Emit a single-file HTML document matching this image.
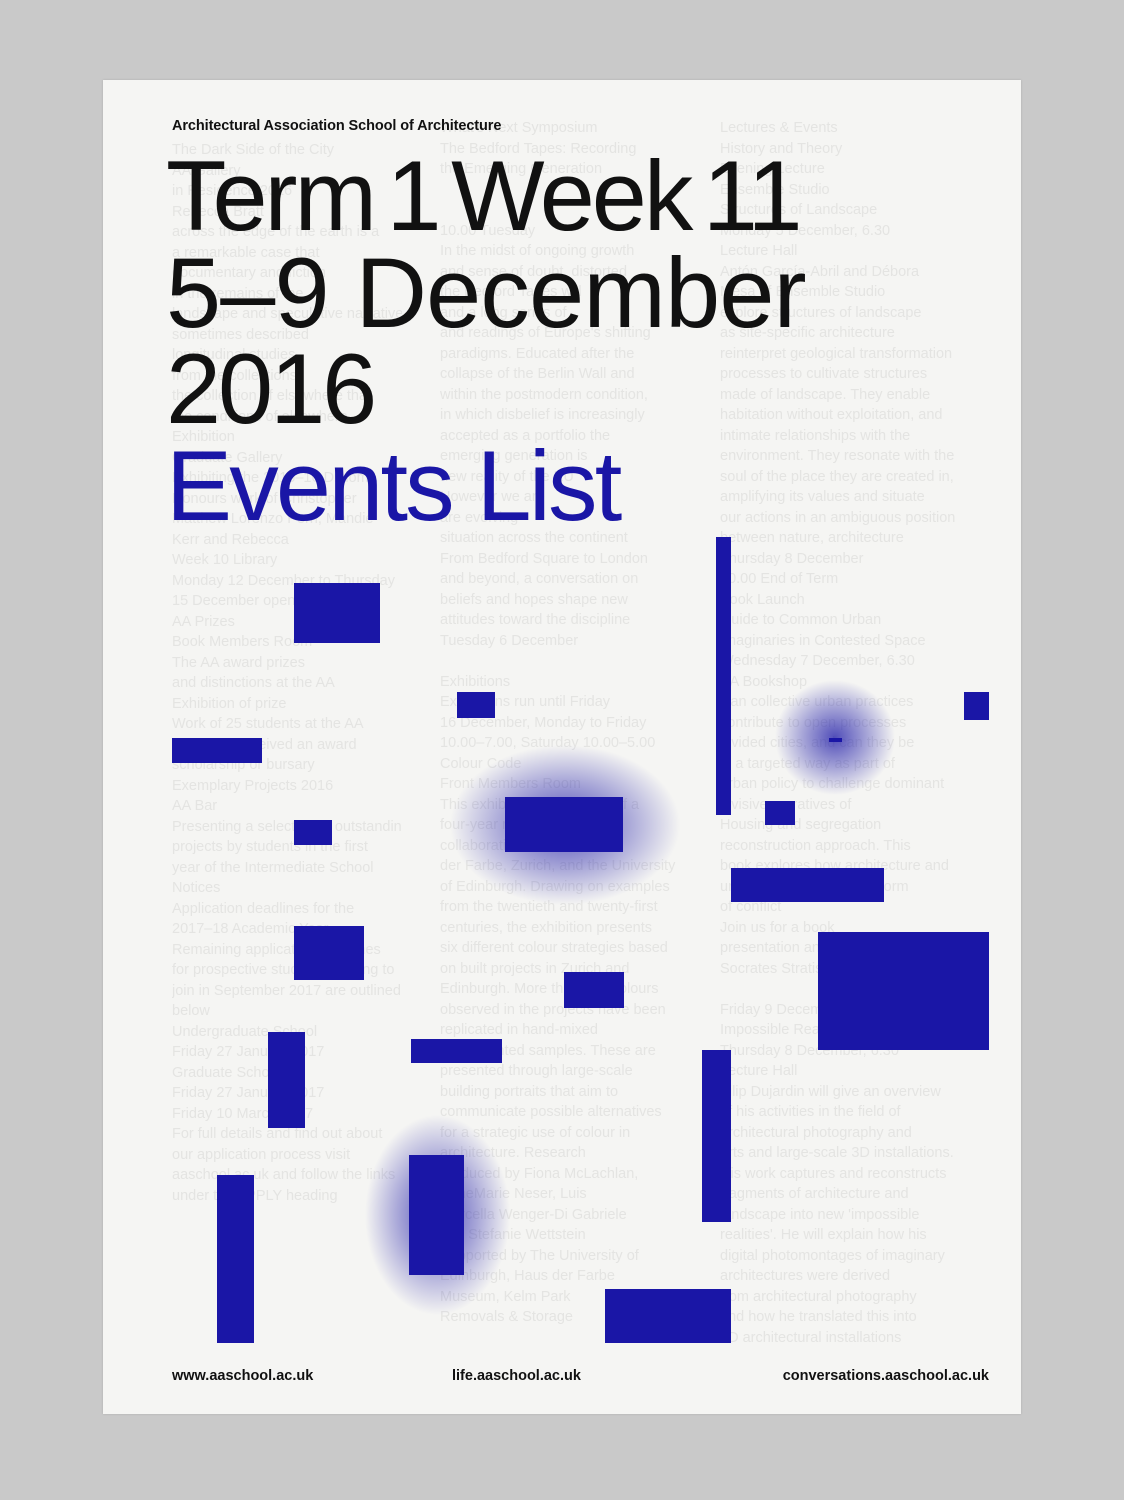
<!DOCTYPE html>
<html><head><meta charset="utf-8"><style>
html,body{margin:0;padding:0}
body{width:1124px;height:1500px;background:#c9c9c9;position:relative;overflow:hidden;font-family:"Liberation Sans",Arial,sans-serif}
.paper{position:absolute;left:103px;top:80px;width:918px;height:1334px;background:#f5f5f3;box-shadow:0 0 2px rgba(0,0,0,.15)}
.g{position:absolute;color:#e4e4e2;font-size:14.5px;line-height:20.5px;white-space:pre;overflow:hidden}
.head{position:absolute;left:172px;top:118px;font-size:14.5px;font-weight:bold;color:#111;letter-spacing:-0.1px}
.big{position:absolute;left:166px;font-size:99px;line-height:96px;letter-spacing:-2px;color:#111;white-space:nowrap}
.b{position:absolute;background:#1a16a6}
.glow{position:absolute;border-radius:50%;background:radial-gradient(closest-side,rgba(26,22,166,.75),rgba(26,22,166,.35) 55%,rgba(26,22,166,0))}
.f{position:absolute;top:1368px;font-size:14.5px;font-weight:bold;color:#111}
</style></head><body>
<div class="paper"></div>
<div class="g" style="left:172px;top:140px;width:230px;height:1230px">The Dark Side of the City
AA Gallery
in Residence 2016
Rebecca Bratt
across the edge of the earth is a
a remarkable case that
documentary and fiction
in the remains of the
landscape and speculative narratives
sometimes described
longitudinal studies
from the collections
the collection of elsewhere that
the conditions of elsewhere
Exhibition
Graduate Gallery
Exhibiting the 2016–16 Diploma
Honours work of Christopher
Matthew Lorenzo Perri, Mandie
Kerr and Rebecca
Week 10 Library
Monday 12 December to Thursday
15 December open 10.00
AA Prizes
Book Members Room
The AA award prizes
and distinctions at the AA
Exhibition of prize
Work of 25 students at the AA
who have received an award
scholarship or bursary
Exemplary Projects 2016
AA Bar
Presenting a selection of outstanding
projects by students in the first
year of the Intermediate School
Notices
Application deadlines for the
2017–18 Academic Year
Remaining application deadlines
for prospective students wishing to
join in September 2017 are outlined
below
Undergraduate School
Friday 27 January 2017
Graduate School
Friday 27 January 2017
Friday 10 March 2017
For full details and find out about
our application process visit
aaschool.ac.uk and follow the links
under the APPLY heading</div>
<div class="g" style="left:440px;top:118px;width:250px;height:1210px">What's Next Symposium
The Bedford Tapes: Recording
the Emerging Generation


10.00 Tuesday
In the midst of ongoing growth
and sense of doubt, distorted
the Bedford Tapes will
and a long series of
and readings of Europe's shifting
paradigms. Educated after the
collapse of the Berlin Wall and
within the postmodern condition,
in which disbelief is increasingly
accepted as a portfolio the
emerging generation is
new reality of the EU
However we are
are evolving
situation across the continent
From Bedford Square to London
and beyond, a conversation on
beliefs and hopes shape new
attitudes toward the discipline
Tuesday 6 December

Exhibitions
Exhibitions run until Friday
16 December, Monday to Friday
10.00–7.00, Saturday 10.00–5.00
Colour Code
Front Members Room
This exhibition is the result of a
four-year research project
collaboration between
der Farbe, Zurich, and the University
of Edinburgh. Drawing on examples
from the twentieth and twenty-first
centuries, the exhibition presents
six different colour strategies based
on built projects in Zurich and
Edinburgh. More than 950 colours
observed in the projects have been
replicated in hand-mixed
hand-painted samples. These are
presented through large-scale
building portraits that aim to
communicate possible alternatives
for a strategic use of colour in
architecture. Research
produced by Fiona McLachlan,
AnneMarie Neser, Luis
Marcella Wenger-Di Gabriele
and Stefanie Wettstein
Supported by The University of
Edinburgh, Haus der Farbe
Museum, Kelm Park
Removals &amp; Storage</div>
<div class="g" style="left:720px;top:118px;width:270px;height:1250px">Lectures &amp; Events
History and Theory
Evening Lecture
Ensemble Studio
Structures of Landscape
Monday 5 December, 6.30
Lecture Hall
Antón García-Abril and Débora
Mesa of Ensemble Studio
explore structures of landscape
as site-specific architecture
reinterpret geological transformation
processes to cultivate structures
made of landscape. They enable
habitation without exploitation, and
intimate relationships with the
environment. They resonate with the
soul of the place they are created in,
amplifying its values and situate
our actions in an ambiguous position
between nature, architecture
Thursday 8 December
10.00 End of Term
Book Launch
Guide to Common Urban
Imaginaries in Contested Space
Wednesday 7 December, 6.30
AA Bookshop
Can collective urban practices
contribute to open processes
divided cities, and can they be
in a targeted way as part of
urban policy to challenge dominant
divisive narratives of
Housing and segregation
reconstruction approach. This
book explores how architecture and
urban planning can transform
of conflict
Join us for a book
presentation and discussion with
Socrates Stratis, Peter Bishop and

Friday 9 December
Impossible Reality
Thursday 8 December, 6.30
Lecture Hall
Filip Dujardin will give an overview
of his activities in the field of
architectural photography and
arts and large-scale 3D installations.
His work captures and reconstructs
fragments of architecture and
landscape into new 'impossible
realities'. He will explain how his
digital photomontages of imaginary
architectures were derived
from architectural photography
and how he translated this into
3D architectural installations</div>

<div class="head">Architectural Association School of Architecture</div>
<div class="big" style="top:148px;word-spacing:-12px;letter-spacing:-3px">Term 1 Week 11</div>
<div class="big" style="top:245px;letter-spacing:-0.8px">5–9 December</div>
<div class="big" style="top:341px;letter-spacing:-3px">2016</div>
<div class="big" style="top:438px;color:#1a16a6;letter-spacing:-2.8px">Events List</div>

<div class="glow" style="left:450px;top:745px;width:230px;height:160px"></div>
<div class="glow" style="left:775px;top:680px;width:120px;height:115px"></div>
<div class="glow" style="left:365px;top:1115px;width:145px;height:200px"></div>

<div class="b" style="left:294px;top:583px;width:86px;height:60px"></div>
<div class="b" style="left:457px;top:692px;width:38px;height:26px"></div>
<div class="b" style="left:172px;top:738px;width:90px;height:25px"></div>
<div class="b" style="left:294px;top:820px;width:38px;height:25px"></div>
<div class="b" style="left:505px;top:797px;width:118px;height:55px"></div>
<div class="b" style="left:716px;top:537px;width:15px;height:278px"></div>
<div class="b" style="left:964px;top:692px;width:25px;height:28px"></div>
<div class="b" style="left:829px;top:738px;width:13px;height:4px"></div>
<div class="b" style="left:765px;top:801px;width:30px;height:24px"></div>
<div class="b" style="left:731px;top:868px;width:153px;height:34px"></div>
<div class="b" style="left:294px;top:926px;width:70px;height:54px"></div>
<div class="b" style="left:564px;top:972px;width:60px;height:36px"></div>
<div class="b" style="left:818px;top:932px;width:171px;height:118px"></div>
<div class="b" style="left:411px;top:1039px;width:91px;height:24px"></div>
<div class="b" style="left:268px;top:1032px;width:37px;height:96px"></div>
<div class="b" style="left:702px;top:1050px;width:29px;height:172px"></div>
<div class="b" style="left:217px;top:1175px;width:37px;height:168px"></div>
<div class="b" style="left:409px;top:1155px;width:55px;height:120px"></div>
<div class="b" style="left:605px;top:1289px;width:126px;height:54px"></div>

<div class="f" style="left:172px">www.aaschool.ac.uk</div>
<div class="f" style="left:452px">life.aaschool.ac.uk</div>
<div class="f" style="right:135px">conversations.aaschool.ac.uk</div>
</body></html>
